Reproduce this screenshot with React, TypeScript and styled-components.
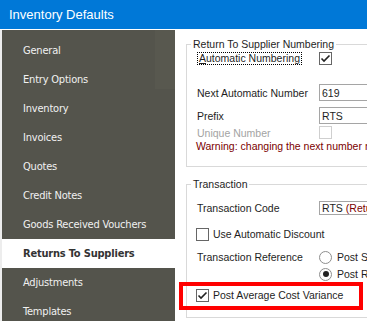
import React from "react";
import styled, { createGlobalStyle } from "styled-components";

const Global = createGlobalStyle`
  html, body { margin: 0; padding: 0; background: #fff; }
  body { width: 367px; height: 321px; overflow: hidden; }
  * { box-sizing: border-box; }
`;

const Window = styled.div`
  width: 367px;
  height: 321px;
  display: flex;
  flex-direction: column;
  overflow: hidden;
  background: #fff;
`;

const TitleBar = styled.div`
  flex: none;
  height: 29px;
  padding-left: 9px;
  background: #0078d7;
  color: #fff;
  font: 13px/29px "Liberation Sans", Arial, sans-serif;
`;

const Body = styled.div`
  flex: 1;
  min-height: 0;
  margin-top: 1px;
  display: flex;
  padding-left: 2px;
  background: #ededed;
`;

const Sidebar = styled.nav`
  position: relative;
  flex: none;
  width: 173px;
  padding-top: 6px;
  background: #54544c;
  font-family: "DejaVu Sans Condensed", "DejaVu Sans", sans-serif;
  font-stretch: condensed;
  font-size: 11px;
  letter-spacing: -0.2px;
`;

const ScrollShade = styled.div`
  position: absolute;
  top: 0;
  right: 0;
  width: 20px;
  height: 59px;
  background: #58584f;
`;

const NavItem = styled.div<{ $active?: boolean }>`
  position: relative;
  height: 29px;
  display: flex;
  align-items: center;
  padding-left: 21px;
  background: ${(p) => (p.$active ? "#fff" : "transparent")};
  color: ${(p) => (p.$active ? "#333" : "#f1f1f1")};
  font-weight: ${(p) => (p.$active ? 700 : 400)};
  white-space: nowrap;
`;

const Content = styled.main`
  position: relative;
  flex: 1;
  min-width: 0;
  overflow: hidden;
  background: #fff;
  padding: 6px 0 0 11px;
  font: 10.5px "Liberation Sans", Arial, sans-serif;
  color: #1e1e1e;
`;

const Group = styled.fieldset<{ $mt?: number }>`
  width: 260px;
  margin: ${(p) => p.$mt ?? 0}px 0 0 0;
  padding: 0 0 14px 10px;
  border: 1px solid #d9d9d9;
  min-width: 0;
`;

const Legend = styled.legend`
  margin-left: -6px;
  padding: 0 2px;
  font-size: 10.5px;
  line-height: 16px;
  color: #1e1e1e;
`;

const Row = styled.div<{ $h: number; $mt: number }>`
  display: grid;
  grid-template-columns: 121px auto;
  align-items: center;
  height: ${(p) => p.$h}px;
  margin-top: ${(p) => p.$mt}px;
  white-space: nowrap;
`;

const FlexRow = styled.div<{ $h: number; $mt: number }>`
  display: flex;
  align-items: center;
  gap: 4px;
  height: ${(p) => p.$h}px;
  margin-top: ${(p) => p.$mt}px;
  margin-left: -1px;
  white-space: nowrap;
`;

const FocusLabel = styled.span`
  justify-self: start;
  padding: 0 1px;
  border: 1px dotted #000;
  line-height: 11px;
  u { text-decoration: underline; }
`;

const Muted = styled.span`
  color: #a3a3a3;
`;

const Warning = styled.div`
  margin-left: -1px;
  color: #7b0000;
  white-space: nowrap;
`;

const TextBox = styled.div<{ $h: number }>`
  width: 90px;
  height: ${(p) => p.$h}px;
  margin-left: 1px;
  display: flex;
  align-items: center;
  padding-left: 2px;
  border: 1px solid #a5a5a5;
  background: #fff;
  white-space: nowrap;
`;

const Maroon = styled.span`
  color: #7b0000;
  margin-left: 3px;
`;

const Box = styled.span<{ $disabled?: boolean }>`
  flex: none;
  width: 13px;
  height: 13px;
  border: 1px solid ${(p) => (p.$disabled ? "#cfcfcf" : "#666")};
  background: #fff;
  display: inline-flex;
  align-items: center;
  justify-content: center;
`;

const Radio = styled.span<{ $on?: boolean }>`
  flex: none;
  width: 13px;
  height: 13px;
  border-radius: 50%;
  border: 1px solid #8e8e8e;
  background: #fff;
  display: inline-flex;
  align-items: center;
  justify-content: center;
  &::after {
    content: "";
    width: 6px;
    height: 6px;
    border-radius: 50%;
    background: ${(p) => (p.$on ? "#222" : "transparent")};
  }
`;

const Control = styled.div`
  display: flex;
  align-items: center;
  gap: 5px;
  margin-left: 1px;
`;

const Highlight = styled.div`
  position: absolute;
  left: 4px;
  top: 252px;
  width: 184px;
  height: 28px;
  border: 4px solid #f00;
  pointer-events: none;
`;

const Check = () => (
  <svg width="11" height="11" viewBox="0 0 11 11">
    <polyline points="1.5,5.5 4,8 9.5,2.5" fill="none" stroke="#222" strokeWidth="1.6" />
  </svg>
);

const items = [
  "General",
  "Entry Options",
  "Inventory",
  "Invoices",
  "Quotes",
  "Credit Notes",
  "Goods Received Vouchers",
  "Returns To Suppliers",
  "Adjustments",
  "Templates",
];

export default function App() {
  return (
    <>
      <Global />
      <Window>
        <TitleBar>Inventory Defaults</TitleBar>
        <Body>
          <Sidebar>
            <ScrollShade />
            {items.map((it) => (
              <NavItem key={it} $active={it === "Returns To Suppliers"}>
                {it}
              </NavItem>
            ))}
          </Sidebar>
          <Content>
            <Group>
              <Legend>Return To Supplier Numbering</Legend>
              <Row $h={16} $mt={-2}>
                <FocusLabel>
                  <u>A</u>utomatic Numbering
                </FocusLabel>
                <Control>
                  <Box>
                    <Check />
                  </Box>
                </Control>
              </Row>
              <Row $h={17} $mt={18}>
                <span>Next Automatic Number</span>
                <TextBox $h={17}>619</TextBox>
              </Row>
              <Row $h={17} $mt={6}>
                <span>Prefix</span>
                <TextBox $h={17}>RTS</TextBox>
              </Row>
              <Row $h={13} $mt={2}>
                <Muted>Unique Number</Muted>
                <Control>
                  <Box $disabled />
                </Control>
              </Row>
              <Row $h={13} $mt={0}>
                <Warning>Warning: changing the next number may cause duplicates</Warning>
              </Row>
            </Group>
            <Group $mt={9}>
              <Legend>Transaction</Legend>
              <Row $h={16} $mt={8}>
                <span>Transaction Code</span>
                <TextBox $h={14}>
                  RTS<Maroon>(Return To Supplier)</Maroon>
                </TextBox>
              </Row>
              <FlexRow $h={16} $mt={10}>
                <Box />
                <span>Use Automatic Discount</span>
              </FlexRow>
              <Row $h={16} $mt={7}>
                <span>Transaction Reference</span>
                <Control>
                  <Radio />
                  <span>Post Supplier Reference</span>
                </Control>
              </Row>
              <Row $h={16} $mt={1}>
                <span />
                <Control>
                  <Radio $on />
                  <span>Post RTS Number</span>
                </Control>
              </Row>
              <FlexRow $h={16} $mt={5}>
                <Box>
                  <Check />
                </Box>
                <span>Post Average Cost Variance</span>
              </FlexRow>
            </Group>
            <Highlight />
          </Content>
        </Body>
      </Window>
    </>
  );
}
